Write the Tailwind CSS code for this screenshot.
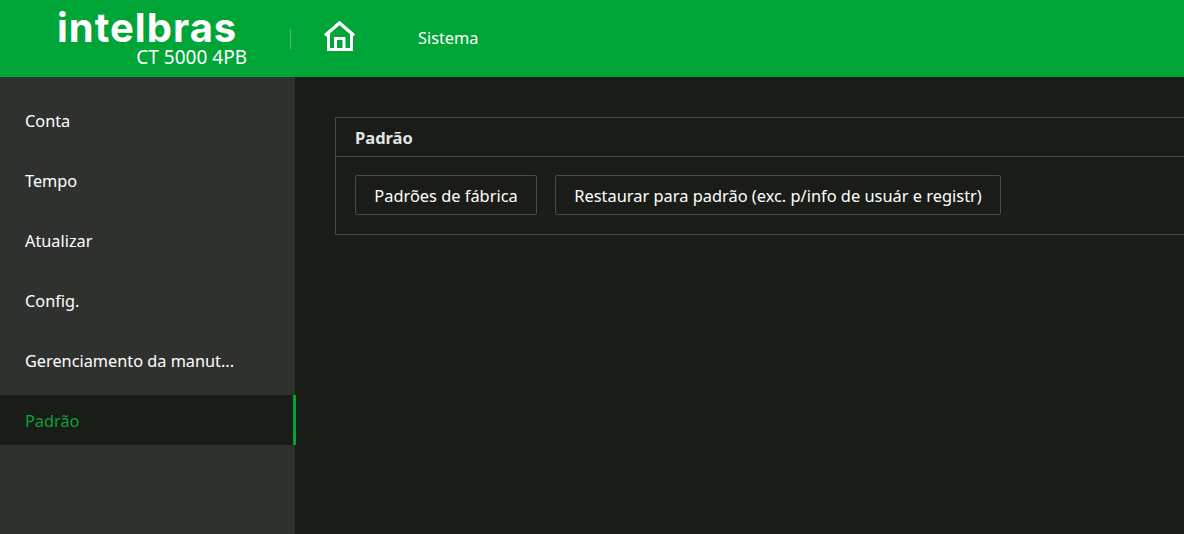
<!DOCTYPE html>
<html lang="pt-BR">
<head>
  <meta charset="UTF-8" />
  <title>Intelbras CT 5000 4PB - Padrão</title>
  <script src="https://cdn.jsdelivr.net/npm/@tailwindcss/browser@4"></script>
</head>
<body class="h-[534px] overflow-hidden bg-[#1a1c17] text-white font-['Noto_Sans','Open_Sans',sans-serif]">

  <!-- Header -->
  <header class="h-[77px] bg-[#00a538] flex items-start">
    <div class="w-[248px] shrink-0 pl-[57px] flex flex-col">
      <span class="pt-[8px] text-[40px] leading-[39px] font-bold font-['Inter',sans-serif] tracking-[1px] whitespace-nowrap">intelbras</span>
      <span class="self-end pr-[1px] text-[19px] leading-[20px] whitespace-nowrap">CT 5000 4PB</span>
    </div>
    <div class="w-px h-[20px] bg-white/30 mt-[29px] ml-[42px]"></div>
    <svg class="ml-[32px] mt-[20px]" width="34" height="32" viewBox="0 0 34 32" fill="none" stroke="#fff" stroke-width="3.4">
      <path d="M2 15.5 L16.5 3 L31 15.5" />
      <path d="M5.5 13 V29.5 H28.5 V13" stroke-width="3" />
      <path d="M12.5 29 V18.5 H21 V29" stroke-width="3" />
    </svg>
    <span class="ml-[61px] mt-[28px] text-[16.3px] leading-[20px]">Sistema</span>
  </header>

  <div class="flex h-[457px]">
    <!-- Sidebar -->
    <nav class="w-[295px] shrink-0 bg-[#2f312f] pt-[18px] flex flex-col gap-[10px] text-[16.3px]">
      <a class="h-[50px] pl-[25px] pt-[2px] flex items-center">Conta</a>
      <a class="h-[50px] pl-[25px] pt-[2px] flex items-center">Tempo</a>
      <a class="h-[50px] pl-[25px] pt-[2px] flex items-center">Atualizar</a>
      <a class="h-[50px] pl-[25px] pt-[2px] flex items-center">Config.</a>
      <a class="h-[50px] pl-[25px] pt-[2px] flex items-center">Gerenciamento da manut...</a>
      <a class="h-[50px] w-[296px] relative pl-[25px] pt-[2px] flex items-center bg-[#1a1c17] text-[#0e9f3a] border-r-[3px] border-[#00a538]">Padrão</a>
    </nav>

    <!-- Content -->
    <main class="flex-1 min-w-0 pl-[40px] pt-[40px]">
      <section class="w-[900px] h-[118px] border border-[#4a4b4c]">
        <h2 class="h-[39px] pl-[19px] pt-[2px] flex items-center text-[16.5px] font-bold text-[#e3e6e8] border-b border-[#4a4b4c]">Padrão</h2>
        <div class="pt-[18px] pl-[19px] flex gap-[18px] text-[16.4px]">
          <button class="h-[40px] w-[182px] pt-[2px] border border-[#4a4b4c] rounded-[2px]">Padrões de fábrica</button>
          <button class="h-[40px] w-[446px] pt-[2px] border border-[#4a4b4c] rounded-[2px] whitespace-nowrap">Restaurar para padrão (exc. p/info de usuár e registr)</button>
        </div>
      </section>
    </main>
  </div>
</body>
</html>
